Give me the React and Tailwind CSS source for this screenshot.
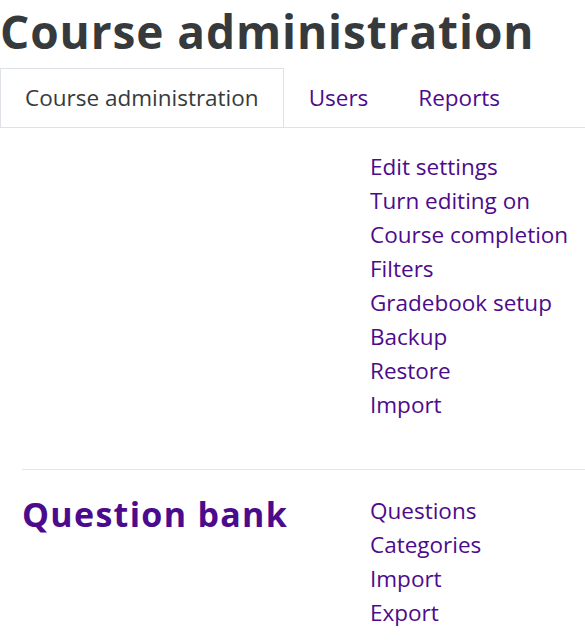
import React from "react"

const LINK = "text-[#4c0b8c] hover:underline"

const courseLinks = ["Edit settings", "Turn editing on", "Course completion", "Filters", "Gradebook setup", "Backup", "Restore", "Import"]
const bankLinks = ["Questions", "Categories", "Import", "Export"]

function Section({ title, links }) {
  return (
    <div className="flex">
      <div className="w-[348px] shrink-0">
        {title && (
          <h3 className="text-[34px] font-bold leading-[40px] tracking-[1.3px] text-[#4c0b8c]">{title}</h3>
        )}
      </div>
      <ul className="flex flex-col">
        {links.map((l, i) => (
          <li key={i} className="text-[22.5px] leading-[34px]">
            <a href="#" className={LINK}>{l}</a>
          </li>
        ))}
      </ul>
    </div>
  )
}

export default function App() {
  return (
    <div className="bg-white min-h-screen overflow-hidden font-['Open_Sans',sans-serif] text-[#373a3c]">
      <h2 className="text-[46px] font-bold leading-[60px] tracking-[0.9px] whitespace-nowrap pt-[1px]">Course administration</h2>

      {/* tabs */}
      <div className="flex mt-[7px] border-b border-[#dee2e6]">
        <div className="px-[24px] h-[59px] flex items-center text-[22.5px] border border-b-0 border-[#dee2e6] bg-white -mb-px">
          Course administration
        </div>
        <a href="#" className={`px-[24px] h-[59px] flex items-center text-[22.5px] border border-transparent ${LINK}`}>Users</a>
        <a href="#" className={`px-[24px] h-[59px] flex items-center text-[22.5px] border border-transparent ${LINK}`}>Reports</a>
      </div>

      <div className="pl-[22px]">
        <div className="pt-[22px] pb-[47px]">
          <Section title="" links={courseLinks} />
        </div>
        <div className="border-t border-[#e5e5e5] pt-[24px]">
          <Section title="Question bank" links={bankLinks} />
        </div>
      </div>
    </div>
  )
}
